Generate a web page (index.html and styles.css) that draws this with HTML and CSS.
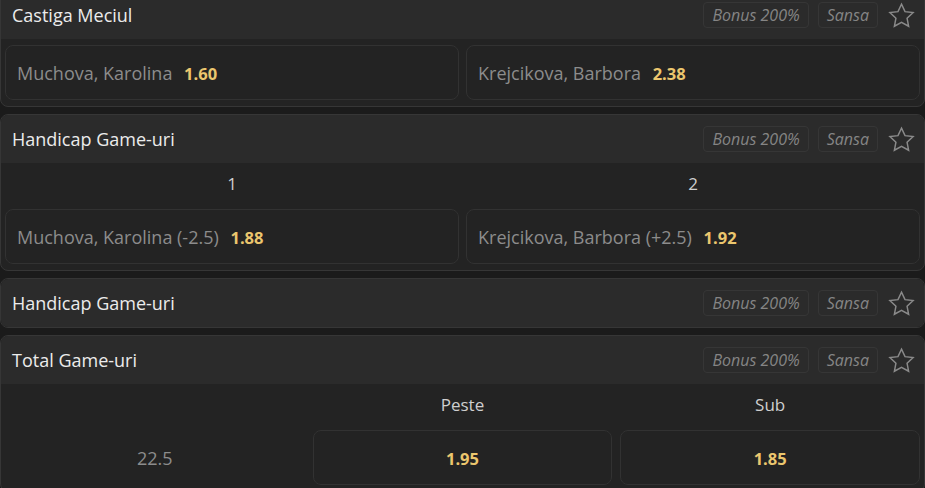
FILE: index.html
```
<!DOCTYPE html>
<html>
<head>
  <title>Pariuri - Muchova vs Krejcikova</title>
  <link rel="stylesheet" href="styles.css">
</head>
<body>
  <div class="markets">

    <div class="market">
      <div class="market-head">
        <span class="market-title">Castiga Meciul</span>
        <span class="badge">Bonus 200%</span>
        <span class="badge">Sansa</span>
        <svg class="star" viewBox="0 0 24 24"><path d="M12 2.6l2.9 6.2 6.7.8-5 4.6 1.3 6.7L12 17.6l-5.9 3.3 1.3-6.7-5-4.6 6.7-.8z"/></svg>
      </div>
      <div class="market-body">
        <div class="outcomes two">
          <button class="odd">Muchova, Karolina <b>1.60</b></button>
          <button class="odd">Krejcikova, Barbora <b>2.38</b></button>
        </div>
      </div>
    </div>

    <div class="market">
      <div class="market-head">
        <span class="market-title">Handicap Game-uri</span>
        <span class="badge">Bonus 200%</span>
        <span class="badge">Sansa</span>
        <svg class="star" viewBox="0 0 24 24"><path d="M12 2.6l2.9 6.2 6.7.8-5 4.6 1.3 6.7L12 17.6l-5.9 3.3 1.3-6.7-5-4.6 6.7-.8z"/></svg>
      </div>
      <div class="market-body">
        <div class="outcomes two">
          <div class="col-label">1</div>
          <div class="col-label">2</div>
          <button class="odd">Muchova, Karolina (-2.5) <b>1.88</b></button>
          <button class="odd">Krejcikova, Barbora (+2.5) <b>1.92</b></button>
        </div>
      </div>
    </div>

    <div class="market">
      <div class="market-head">
        <span class="market-title">Handicap Game-uri</span>
        <span class="badge">Bonus 200%</span>
        <span class="badge">Sansa</span>
        <svg class="star" viewBox="0 0 24 24"><path d="M12 2.6l2.9 6.2 6.7.8-5 4.6 1.3 6.7L12 17.6l-5.9 3.3 1.3-6.7-5-4.6 6.7-.8z"/></svg>
      </div>
    </div>

    <div class="market">
      <div class="market-head">
        <span class="market-title">Total Game-uri</span>
        <span class="badge">Bonus 200%</span>
        <span class="badge">Sansa</span>
        <svg class="star" viewBox="0 0 24 24"><path d="M12 2.6l2.9 6.2 6.7.8-5 4.6 1.3 6.7L12 17.6l-5.9 3.3 1.3-6.7-5-4.6 6.7-.8z"/></svg>
      </div>
      <div class="market-body">
        <div class="outcomes three">
          <div class="col-label"></div>
          <div class="col-label">Peste</div>
          <div class="col-label">Sub</div>
          <div class="line">22.5</div>
          <button class="odd center"><b>1.95</b></button>
          <button class="odd center"><b>1.85</b></button>
        </div>
      </div>
    </div>

  </div>
</body>
</html>
```

FILE: styles.css
```
body {
  margin: 0;
  background-color: #1b1b1b;
  font-family: "Open Sans", "Noto Sans", sans-serif;
  overflow: hidden;
}

.markets {
  display: flex;
  flex-direction: column;
  gap: 7px;
  margin-top: -10px;
}

.market {
  border: 1px solid #363636;
  border-radius: 8px;
  background-color: #232323;
  overflow: hidden;
}

.market-head {
  display: flex;
  align-items: center;
  gap: 9px;
  height: 48px;
  padding: 0 8px 0 11px;
  background-color: #2b2b2b;
}

.market-title {
  flex: 1;
  color: #ececec;
  font-size: 18px;
}

.badge {
  height: 24px;
  line-height: 24px;
  padding: 0 8px;
  border: 1px solid #363636;
  border-radius: 4px;
  color: #858585;
  font-size: 16px;
  font-style: italic;
}

.star {
  width: 29px;
  height: 29px;
  fill: none;
  stroke: #8a8a8a;
  stroke-width: 1.2;
}

.market-body {
  padding: 6px 4px 6px;
}

.outcomes {
  display: grid;
  column-gap: 7px;
}

.outcomes.two {
  grid-template-columns: 1fr 1fr;
}

.outcomes.three {
  grid-template-columns: 1fr 1fr 1fr;
  column-gap: 8px;
}

.col-label {
  height: 37px;
  padding-top: 3px;
  text-align: center;
  color: #cfcfcf;
  font-size: 17px;
  line-height: 24px;
}

.odd {
  height: 55px;
  padding: 0 11px;
  border: 1px solid #323232;
  border-radius: 8px;
  background-color: #232323;
  color: #8c8c8c;
  font-family: inherit;
  font-size: 18px;
  text-align: left;
}

.odd b {
  margin-left: 7px;
  color: #ebc66e;
  font-size: 16.5px;
  font-weight: 700;
}

.odd.center {
  text-align: center;
}

.odd.center b {
  margin-left: 0;
}

.line {
  display: flex;
  align-items: center;
  justify-content: center;
  color: #8c8c8c;
  font-size: 18px;
}
```
